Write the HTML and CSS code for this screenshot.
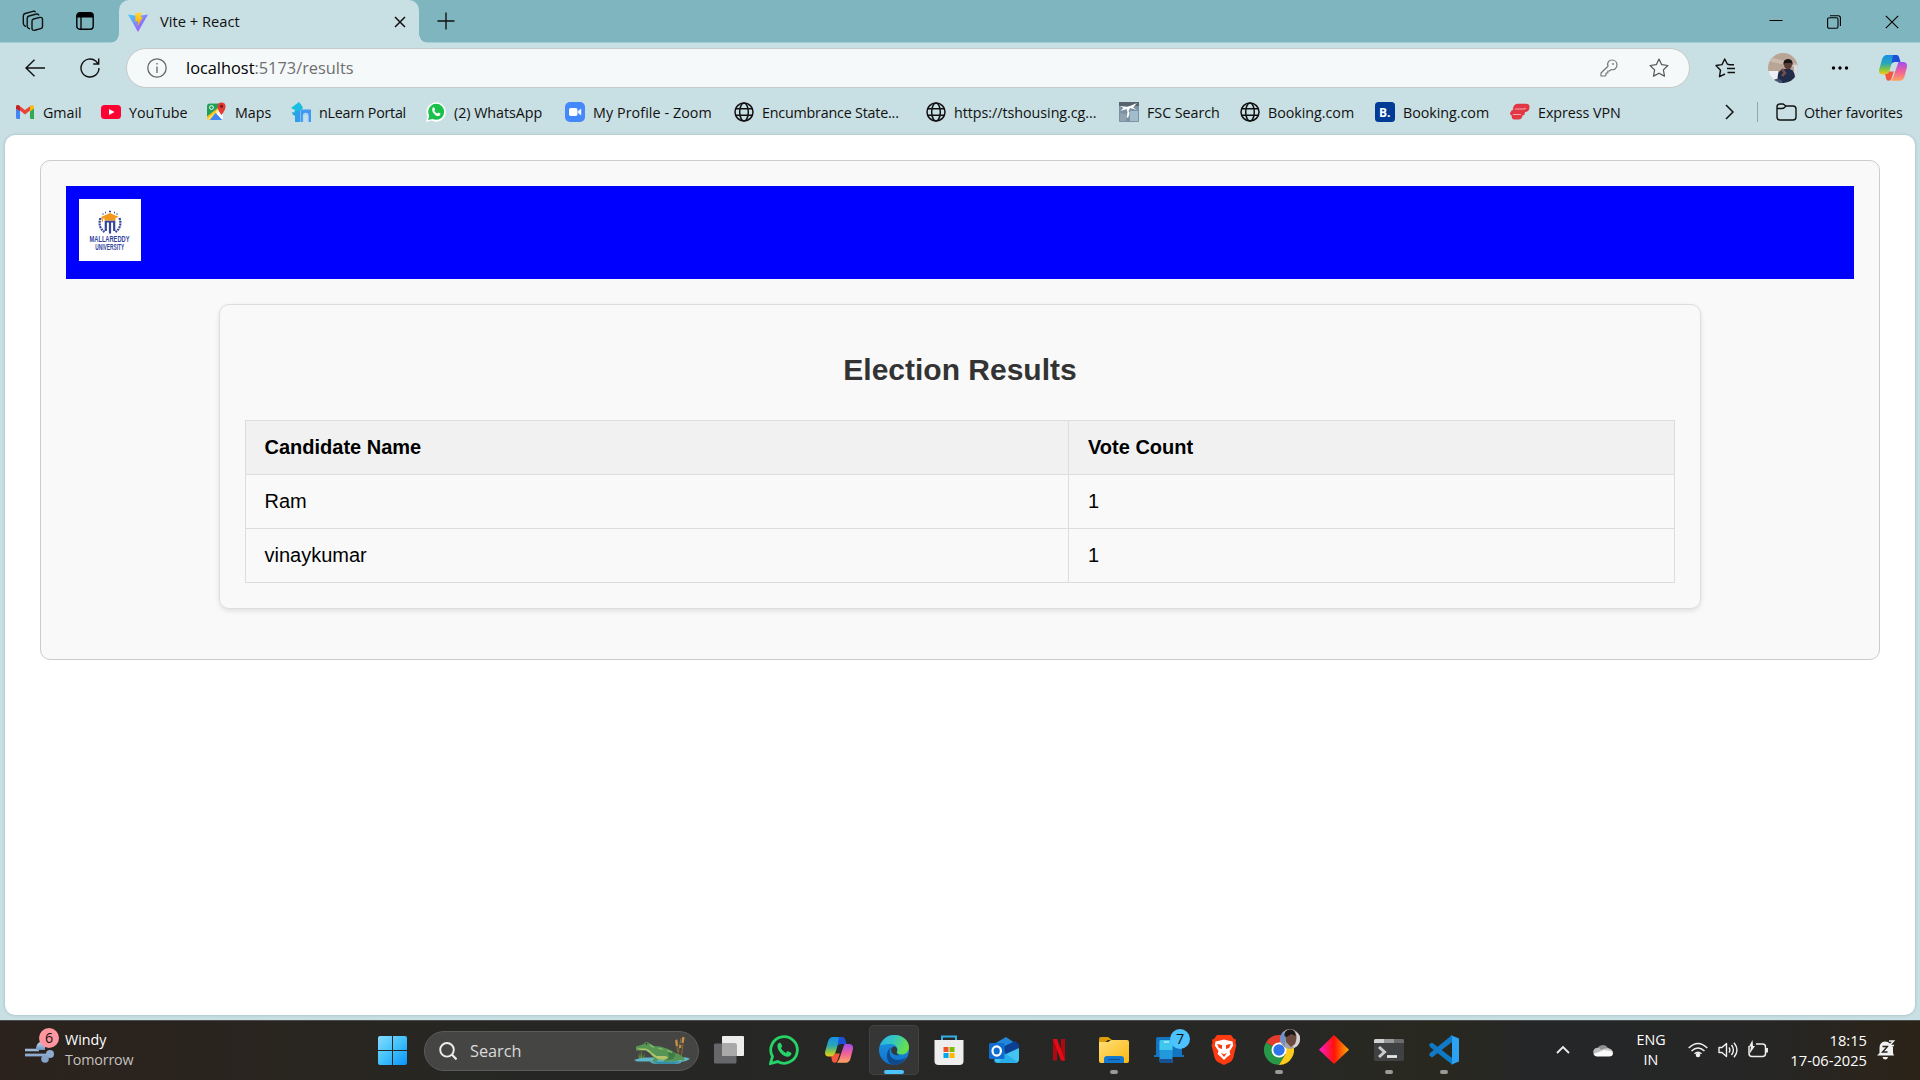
FILE: index.html
```html
<!DOCTYPE html>
<html lang="en">
<head>
<meta charset="utf-8">
<title>Vite + React</title>
<link rel="stylesheet" href="styles.css">
</head>
<body>
<svg class="defs" width="0" height="0" aria-hidden="true">
  <defs>
    <linearGradient id="cpA" x1="0" y1="0" x2="0" y2="1"><stop offset="0" stop-color="#168fe8"/><stop offset=".45" stop-color="#2aa8b4"/><stop offset=".75" stop-color="#8cc63f"/><stop offset="1" stop-color="#f7c91d"/></linearGradient>
    <linearGradient id="cpB" x1="0" y1="0" x2="0" y2="1"><stop offset="0" stop-color="#a04df0"/><stop offset=".5" stop-color="#f0609a"/><stop offset="1" stop-color="#ffa45e"/></linearGradient>
    <linearGradient id="win" x1="0" y1="0" x2="1" y2="1"><stop offset="0" stop-color="#86dcff"/><stop offset=".5" stop-color="#41c1fb"/><stop offset="1" stop-color="#0a93fa"/></linearGradient>
    <linearGradient id="edgeT" x1="0" y1="0" x2="1" y2=".35"><stop offset="0" stop-color="#2bb5e6"/><stop offset=".5" stop-color="#35c6c0"/><stop offset="1" stop-color="#66e04c"/></linearGradient>
    <linearGradient id="edgeL" x1="0" y1="0" x2="0" y2="1"><stop offset="0" stop-color="#1b9de2"/><stop offset="1" stop-color="#1170cc"/></linearGradient>
    <linearGradient id="vite" x1="0" y1="0" x2="1" y2="1"><stop offset="0" stop-color="#41d1ff"/><stop offset="1" stop-color="#bd34fe"/></linearGradient>
    <linearGradient id="bolt" x1="0" y1="0" x2="0" y2="1"><stop offset="0" stop-color="#ffdd35"/><stop offset="1" stop-color="#ff9e00"/></linearGradient>
    <linearGradient id="dia" x1="0" y1="0" x2="1" y2="0"><stop offset="0" stop-color="#ff1bd0"/><stop offset=".5" stop-color="#ff1208"/><stop offset="1" stop-color="#ffae00"/></linearGradient>
    <linearGradient id="fold" x1="0" y1="0" x2="1" y2="1"><stop offset="0" stop-color="#ffde7a"/><stop offset="1" stop-color="#fbb90f"/></linearGradient>
    <linearGradient id="wind" x1="0" y1="0" x2="0" y2="1"><stop offset="0" stop-color="#c3d6ee"/><stop offset="1" stop-color="#6d94c0"/></linearGradient>
    <symbol id="globe" viewBox="0 0 20 20"><g fill="none" stroke="#111" stroke-width="1.5"><circle cx="10" cy="10" r="9"/><ellipse cx="10" cy="10" rx="4.3" ry="9"/><path d="M1.8 6.7h16.4M1.8 13.3h16.4"/></g></symbol>
    <symbol id="copilot" viewBox="0 0 28 26"><path d="M8 0h8l-1.500 2.500L10 17q-1 2.500-4 2.500H3.500C.5 19.500-.5 17 .3 14L3 4.500Q4.300 0 8 0z" fill="url(#cpA)"/><path d="M14 0h3.500c2 0 2.600 2 3 3.500L21.500 7h-4c-3 0-4 .6-5 2z" fill="#1c50d8"/><path d="M20 7h4c3.600 0 4.600 2.500 3.700 6l-2.200 8.500c-.7 2.600-2 4.300-5 4.300H12l2-3 4.500-13Q19 7 20 7z" fill="url(#cpB)"/><path d="M6 19.300q3.500-.3 4.300-2.800h4.500l-2.300 7q-.8 2.300-3 2.300C7.700 25.800 7 24 6.700 22z" fill="#f4573c"/></symbol>
  </defs>
</svg>

<header class="titlebar">
  <svg class="workspaces" viewBox="0 0 22 22" fill="none" stroke="#111" stroke-width="1.4" stroke-linejoin="round"><path d="M11.500 9l6.500-1.600q2.500-.4 2.500 2v7q0 1.800-1.800 2.300l-6 1.600q-2.700.5-2.700-2v-7q0-1.900 1.500-2.300z"/><path d="M8 18.800l-1.300-.5q-1.500-.6-1.500-2.300V8.500q0-2 1.800-2.500l7.500-2q2-.3 2.400 1.500"/><path d="M4 16.500l-1.200-.6Q1.300 15 1.300 13V6q0-2 1.800-2.500L11 1.300q1.800-.4 2.500 1"/></svg>
  <svg class="tab-actions" viewBox="0 0 18 18"><rect x=".8" y=".8" width="16.400" height="16.400" rx="3" fill="none" stroke="#000" stroke-width="1.4"/><path d="M1 5.500V3.500Q1 1 3.500 1h11Q17 1 17 3.500v2z"/><path d="M5 5v12" stroke="#000" stroke-width="1.300"/></svg>
  <div class="tab">
    <svg class="favicon" viewBox="0 0 20 20"><path d="M0 2.500l10 1.400 10-1.400L10 20z" fill="url(#vite)"/><path d="M7.200 1.500L13.600 0l-.9 5 2.300-.3-5.600 10 .5-5.500-2.500.6z" fill="url(#bolt)"/></svg>
    <span class="tab-name">Vite + React</span>
    <svg class="tab-close" viewBox="0 0 12 12"><path d="M1 1l10 10M11 1L1 11" stroke="#111" stroke-width="1.500"/></svg>
  </div>
  <svg class="new-tab" viewBox="0 0 18 18"><path d="M9 .5v17M.5 9h17" stroke="#111" stroke-width="1.400"/></svg>
  <div class="window-buttons">
    <svg viewBox="0 0 14 14"><path d="M.5 5.500h13" stroke="#000"/></svg>
    <svg viewBox="0 0 14 14" fill="none" stroke="#000" stroke-width="1.100"><rect x=".6" y="2.800" width="10.400" height="10.400" rx="1.500"/><path d="M3 .7h8.200q2.200 0 2.200 2.200V11"/></svg>
    <svg viewBox="0 0 14 14"><path d="M.8.800l12.400 12.400M13.200.800L.8 13.200" stroke="#000" stroke-width="1.100"/></svg>
  </div>
</header>

<div class="toolbar">
  <svg class="back" viewBox="0 0 20 18"><path d="M9.500.700L1 9l8.500 8.300M1 9h19" fill="none" stroke="#111" stroke-width="1.400"/></svg>
  <svg class="reload" viewBox="0 0 20 20"><path d="M19 10a9 9 0 1 1-3-6.700L18.500 6M18.700.500V6h-5.500" fill="none" stroke="#111" stroke-width="1.400"/></svg>
  <div class="address">
    <svg class="info" viewBox="0 0 20 20"><circle cx="10" cy="10" r="9.200" fill="none" stroke="#666" stroke-width="1.300"/><path d="M10 8.500V15M10 5v1.600" stroke="#666" stroke-width="1.300"/></svg>
    <span class="url"><b>localhost</b>:5173/results</span>
    <svg class="key" viewBox="0 0 18 18" fill="none" stroke="#777" stroke-width="1.200"><path d="M8 7.200C6.800 3.500 9 1 12 1c2.800 0 5 2 5 5s-2.500 5.400-6 4.600L9.500 12H7.800v2H6v2l-1 1H1v-3z" stroke-linejoin="round"/><circle cx="13" cy="5" r=".9" fill="#777" stroke="none"/></svg>
    <svg class="star" viewBox="0 0 20 20"><path d="M10 1l2.700 5.700 6.200.8-4.500 4.400 1.100 6.200L10 15.200l-5.500 2.900 1.100-6.200L1.100 7.500l6.200-.8z" fill="none" stroke="#555" stroke-width="1.200" stroke-linejoin="round"/></svg>
  </div>
  <svg class="favs" viewBox="0 0 20 20" fill="none" stroke="#111" stroke-width="1.400" stroke-linejoin="round"><path d="M10 16l-5.500 2.700 1-6.500L1 7.500l6-.9L9.700 1l2.600 5 1.700.7H19M12 10.500h8M12.500 14.500H20"/></svg>
  <svg class="avatar" viewBox="0 0 30 30"><clipPath id="av"><circle cx="15" cy="15" r="15"/></clipPath><g clip-path="url(#av)"><path fill="#b9a596" d="M0 0h30v30H0z"/><path d="M0 4l30 7v4L0 8z" fill="#cbbbae"/><path d="M0 18h10v12H0z" fill="#edf0f5"/><path d="M26 12h4v12h-4z" fill="#d7dce4"/><path d="M10 30q-2-13 6-14h6q6 2 5 14z" fill="#202c4a"/><ellipse cx="20" cy="11.500" rx="4" ry="5" fill="#5b3e37"/><path d="M15.500 12q-.7-6 4.500-6t4.600 6l-1.500-2h-6z" fill="#191515"/><path d="M14 16l3 4-3 3" stroke="#754f47" stroke-width="2.500" fill="none"/><path d="M6 27q4-3 8 1v2H5z" fill="#43536f"/></g></svg>
  <svg class="dots" viewBox="0 0 18 6"><circle cx="2.500" cy="3" r="1.700"/><circle cx="9" cy="3" r="1.700"/><circle cx="15.500" cy="3" r="1.700"/></svg>
  <svg class="copilot-btn"><use href="#copilot"/></svg>
</div>

<nav class="bookmarks">
  <div class="bm"><svg viewBox="-1 0 20 20"><path d="M0 5v10.500q0 1.500 1.500 1.500H4V8z" fill="#4285f4"/><path d="M18 5v12h-2.500q-1.500 0-1.500-1.500V8z" fill="#34a853"/><path d="M0 5q.3-3 3-1.600L9 8l6-4.600L14 8.500l-5 4-5-4L0 7z" fill="#ea4335"/><path d="M14 4.200Q17.500 2 18 5v1.500l-4 3z" fill="#fbbc04"/><path d="M0 5q.3-3 3-1.600l1 .8V9L0 6.500z" fill="#c5221f"/></svg><span>Gmail</span></div>
  <div class="bm"><svg viewBox="0 0 20 20"><rect y="3" width="20" height="14" rx="3.500" fill="#f03"/><path d="M8 7l5.500 3L8 13z" fill="#fff"/></svg><span>YouTube</span></div>
  <div class="bm"><svg viewBox="0 0 20 20"><rect x="0" y="1.500" width="16" height="16" rx="2" fill="#f2f2f2"/><path d="M0 16V4q0-2.500 2.500-2.500H12v6z" fill="#1fa05a"/><path d="M3 18l5.500-7 6.500 7z" fill="#4287f5"/><path d="M0 14.500L12 5l2 3L3 18H2q-2 0-2-2z" fill="#fbc31c"/><path d="M3 18l5.500-7 6.500 7z" fill="#4287f5"/><path d="M1 17L12 6.500l4 9.500q0 1-1 1.500l-6.500-7.500L2 17.700z" fill="#fff" opacity=".7"/><path d="M4 18l4.500-5.500 5 5.500z" fill="#4287f5"/><circle cx="4.500" cy="5.500" r="1.900" fill="none" stroke="#fff"/><path d="M14.500 13Q10.500 8 10.500 4.500a4 4 0 0 1 8 0q0 3.500-4 8.500z" fill="#e53935"/><circle cx="14.500" cy="4.200" r="1.500" fill="#6d1b1b"/></svg><span>Maps</span></div>
  <div class="bm"><svg viewBox="0 0 20 20"><path d="M8 0l2.500 3L12 6 9 9l-2 3-4-1.500L4 8 0 6l4-3z" fill="#19bfe0"/><path d="M4 9h5v11H4z" fill="#2f9eea"/><path d="M1 10l4 1v3l-3-1z" fill="#19a9e0"/><path d="M9.500 7.500H20V20h-3v-6q0-2-2.200-2T12.500 14v6h-3z" fill="#4197f2"/><path d="M12.500 20v-6q0-2.500 2.300-2.500T17 14v6" fill="none" stroke="#a9d6fb" stroke-width="1.400"/></svg><span class="nlearn">nLearn Portal</span></div>
  <div class="bm"><svg viewBox="0 0 20 20"><path d="M0 20l1.500-5.500A9.700 9.700 0 1 1 5.600 18.600z" fill="#fff"/><circle cx="10.200" cy="9.800" r="8" fill="#19c14a"/><path d="M2 18l1.500-5 3.500 3.700z" fill="#19c14a"/><path d="M6.300 6.500c.8-1.800 2-1.200 2.300-.3l.5 1.300-.8 1.200q1 2 3 2.900l1-1.100 2 1c.6.5-.3 2.300-1.800 2.600-3 .3-7-4-6.200-7.600z" fill="#fff"/></svg><span>(2) WhatsApp</span></div>
  <div class="bm"><svg viewBox="0 0 20 20"><rect width="20" height="20" rx="5" fill="#4389fb"/><rect x="4" y="6" width="8.500" height="8" rx="1.800" fill="#fff"/><path d="M13.200 9l3-2.500v7l-3-2.500z" fill="#fff"/></svg><span class="zoomed">My Profile - Zoom</span></div>
  <div class="bm"><svg><use href="#globe"/></svg><span class="encumb">Encumbrance State...</span></div>
  <div class="bm"><svg><use href="#globe"/></svg><span>https://tshousing.cg...</span></div>
  <div class="bm"><svg viewBox="0 0 20 20"><rect width="20" height="20" rx="1" fill="#7b92a4"/><path d="M0 0h20v4H0z" fill="#57636f"/><path d="M11 9h8v10H11z" fill="#a2bccb"/><path d="M1 4l7 1 3-1 7-3-4 4.500 4 2.500-7-2-1.500 3 1 2-1 4-2 1 1-6-1-3-6 2 3-3z" fill="#fff"/><path d="M1 11l6 1v7H1z" fill="#92a2ae"/></svg><span>FSC Search</span></div>
  <div class="bm"><svg><use href="#globe"/></svg><span>Booking.com</span></div>
  <div class="bm"><svg viewBox="0 0 20 20"><rect width="20" height="20" rx="3.500" fill="#003b95"/><text x="4" y="15" class="b-mark">B.</text></svg><span>Booking.com</span></div>
  <div class="bm"><svg viewBox="0 0 20 20"><path d="M8 1.800h8q3.800 0 3.500 3.700-.3 4.300-4.500 4.500.2 3-2.500 3.500-.5 4-4 4H4.500q-3.200 0-2.700-4Q-.5 13.200.3 10.500 1 8 4 7.500H2.700Q3.500 1.800 8 1.800z" fill="#e23744"/><path d="M5 7h8.500q1.500 0 2-1M3 12.500h8" stroke="#f3a9ae" stroke-width="1.200" fill="none"/></svg><span>Express VPN</span></div>
  <div class="bm-more">
    <svg class="bm-chev" viewBox="0 0 9 16"><path d="M1 1l7 7-7 7" fill="none" stroke="#111" stroke-width="1.500"/></svg>
    <i class="bm-sep"></i>
    <svg class="bm-folder" viewBox="0 0 21 18"><path d="M1 4q0-3 3-3h3l3 2h7q3 0 3 3v8q0 3-3 3H4q-3 0-3-3zM1 5.500h5q1.500 0 2.500-1L10 3" fill="none" stroke="#111" stroke-width="1.400"/></svg>
    <span class="other">Other favorites</span>
  </div>
</nav>

<main class="page">
  <section class="container">
    <div class="banner">
      <svg class="logo" viewBox="0 0 62 62"><path fill="#fff" d="M0 0h62v62H0z"/><g fill="none" stroke="#34449a" stroke-width="2.200" stroke-dasharray="2 .8"><path d="M21.500 19q-3 9 4 14M40.500 19q3 9-4 14"/></g><path d="M26.800 32v-9.500h8.400V32M31 22v12.500" fill="none" stroke="#34449a" stroke-width="2.200"/><path d="M22 18l9-4 9 4-3.500 1v2.500h-11v-2.200L24 19.800V23h-1.200v-4z" fill="#f39a1e"/><path d="M30 12.500h2M26 13.500h1M35 13.500h1M23.500 15h1M37.500 15h1" stroke="#34449a" stroke-width="1.300"/><text class="logo-text" x="10.500" y="43.300" font-size="9.800" textLength="40" lengthAdjust="spacingAndGlyphs">MALLAREDDY</text><text class="logo-text" x="16.300" y="51" font-size="8.600" textLength="29" lengthAdjust="spacingAndGlyphs">UNIVERSITY</text></svg>
    </div>
    <div class="card">
      <h2>Election Results</h2>
      <table>
        <thead><tr><th class="col-name">Candidate Name</th><th>Vote Count</th></tr></thead>
        <tbody><tr><td>Ram</td><td>1</td></tr><tr><td>vinaykumar</td><td>1</td></tr></tbody>
      </table>
    </div>
  </section>
</main>

<footer class="taskbar">
  <div class="weather">
    <svg viewBox="0 0 34 36"><path d="M1 20h14" stroke="#9db8d8" stroke-width="2.600"/><path d="M12 19q0-5 4-7l5 3v5h-7z" fill="url(#wind)"/><path d="M1 25h26" stroke="#8fabd0" stroke-width="2.800" fill="none"/><circle cx="26" cy="24" r="4" fill="#8fabd0"/><circle cx="21" cy="29" r="3.800" fill="#84a3c9"/></svg>
    <span class="alert">6</span>
    <div class="weather-text"><span>Windy</span><span class="dim">Tomorrow</span></div>
  </div>
  <svg class="start" viewBox="0 0 29 29"><path d="M0 2q0-2 2-2h12v14H0zM15 0h12q2 0 2 2v12H15zM0 15h14v14H2q-2 0-2-2zM15 15h14v12q0 2-2 2H15z" fill="url(#win)"/></svg>
  <div class="search">
    <svg class="glass" viewBox="0 0 18 18"><circle cx="8" cy="7.800" r="6.800" fill="none" stroke="#eee" stroke-width="1.900"/><path d="M12.800 12.600l4.700 4.800" stroke="#eee" stroke-width="2.200"/></svg>
    <span>Search</span>
    <svg class="croc" viewBox="0 0 56 30"><path d="M0 24q6-3 14-2.500l32-.5q8 0 10 2-4 2.500-9 3 1 2-10 2H25q-8 0-9-2.500H5q-3 0-5-1.500z" fill="#5fb8c9"/><path d="M17 25.500h30l-6 2.500H24z" fill="#368fa9"/><path d="M4.500 22l.5-6 1 6 1.500-8 .8 8 2.700-5-1 5" fill="#5d8e3f"/><path d="M43.500 22l3.500-20M49 8l-2 14M42.500 3l1 13" stroke="#8b6a35" stroke-width="1" fill="none"/><path d="M48.500 7l1-6M43 10l-.8-6M46 12l.3-3" stroke="#c4904a" stroke-width="2.300"/><path d="M2 10.500q4-1.500 8-2.500 1-2.500 3.500-1.800 3.500 1.800 6.500 3.800 7 0 12 2.200 7 2.600 9 4.800 6 1 10 6.500-2 1.500-5 .5-5 2-10 1l-1.500.8h-5l1-2-6-.3-2 2h-5l3-3-5-5.500-5-3q-4 .8-8.500.5z" fill="#569554"/><path d="M2.500 12.500h9q4 1 6 4l5 3.500h9l3 1.500-4 2.300-6.500-.5-1.500-1q-4-2-6.500-5.300L12 14q-6 .7-9.500-1.500z" fill="#b5c46a"/><path d="M34 17q4-3 7.500 1.500L39 23l-6 1 2-3z" fill="#3f7a48"/><circle cx="12.500" cy="7.800" r=".8" fill="#222"/><path d="M16 9l4 2.500M24 12l5 1.500M33 14.500l5 2" stroke="#8cc06a" stroke-width="1.200"/></svg>
  </div>
  <div class="apps">
    <div class="app"><svg viewBox="0 0 30 30"><rect x="8" y="1" width="22" height="20" rx="1" fill="#eeeded"/><rect y="8.500" width="22.500" height="20" rx="1.500" fill="#66676a"/><path d="M8 8.500h14.500V21H8z" fill="#aaa9aa"/></svg></div>
    <div class="app"><svg viewBox="0 0 30 30"><path d="M1.500 28.500l2-7A13.300 13.300 0 1 1 8.700 26.600z" fill="none" stroke="#25d366" stroke-width="2.800"/><path d="M8.500 10c1-3 3.200-2.500 3.700-1.300l1 2.600-1.200 2q1.500 3 5 4.600l1.500-1.900 3.700 1.700c.8.800-.5 3.600-3 4C14.500 22.200 7.500 15.500 8.500 10z" fill="#25d366"/></svg></div>
    <div class="app"><svg class="cp"><use href="#copilot"/></svg></div>
    <div class="app active"><svg viewBox="0 0 30 30"><circle cx="15" cy="15" r="15" fill="url(#edgeL)"/><path d="M1 10.500C4 3 10 0 16 0c8 0 14 6 14 12 0 5-3.500 7.500-7.500 7.500-3.500 0-5-1.500-4.500-3 1.500-3-1-7.500-6-7.500-4.500 0-8 .5-11 1.500z" fill="url(#edgeT)"/><path d="M12 12c-3.500 6-.5 13 7 13 3 0 5.500-.8 8-2.500C24 27.500 19.500 30 15 30 8 30 5 18 12 12z" fill="#114a8b"/><path d="M12 14.500q1-3.500 4-3 3 1.500 2 5-1.300 2 2 3.500-4 1-6.500-1.500Q12 17 12 14.500z" fill="#303a3e"/></svg><i class="run on"></i></div>
    <div class="app"><svg viewBox="0 0 30 30"><path d="M8 6V1.500h14V6" fill="none" stroke="#35aee8" stroke-width="2"/><path d="M.5 5h29v21q0 4-4 4h-21q-4 0-4-4z" fill="#efeeee"/><path fill="#f25022" d="M9.500 12h5v5h-5z"/><path fill="#7fba00" d="M15.500 12h5v5h-5z"/><path fill="#00a4ef" d="M9.500 18h5v5h-5z"/><path fill="#ffb900" d="M15.500 18h5v5h-5z"/></svg></div>
    <div class="app"><svg viewBox="0 0 30 30"><path d="M5 9L17 2l12 8v14q0 4-4 4H8q-3 0-3-3z" fill="#2187d8"/><path d="M14 12l12-6 4 3.500v4L17 21z" fill="#0b3f91"/><path d="M6 24l24-11v11q0 4-4 4H10q-4 0-4-4z" fill="#43c5f2"/><path d="M17 19l11.500 8q-1 1-3 1H9z" fill="#2aaeea"/><rect y="8" width="15.500" height="16" rx="1.500" fill="#0f6cd1"/><ellipse cx="7.700" cy="16" rx="4.200" ry="4.700" fill="none" stroke="#fff" stroke-width="2.200"/></svg></div>
    <div class="app"><svg viewBox="0 0 30 30"><path d="M9 4h4v21.500H9zM17 4h4v21.500h-4z" fill="#ae0911"/><path d="M9 4h4l8 21.500h-4z" fill="#e60a16"/></svg></div>
    <div class="app"><svg viewBox="0 0 30 30"><path d="M0 4q0-2 2-2h7l4 3h-4L0 12z" fill="#dc9d0b"/><path d="M0 7h9l3-2h16q2 0 2 2v19q0 2-2 2H2q-2 0-2-2z" fill="url(#fold)"/><path d="M5 28v-4q0-3 3-3h14q3 0 3 3v4z" fill="#1478cf"/><path d="M9 24.500h12" stroke="#0b549b" stroke-width="1.200"/></svg><i class="run"></i></div>
    <div class="app"><svg viewBox="0 0 30 30"><path d="M2 4q0-2 2-2h22q2 0 2 2v16h2v2H0v-2h2z" fill="#1374bf"/><path d="M5.500 5h13v23h-11q-2 0-2-2z" fill="#2199dc"/><path d="M5.500 7q0-2 2-2h11v10h-13z" fill="#41c7ef"/><path d="M5.500 24h13v4h-11q-2 0-2-2z" fill="#174f91"/><path d="M10 7h5" stroke="#eff" stroke-width="1"/></svg><span class="count">7</span></div>
    <div class="app"><svg viewBox="0 0 30 30"><path d="M8 0h14l3 4 2 .5-.5 3.500.8 2-3 13q-1 3-4 4.500L15 30l-5.300-2.500q-3-1.500-4-4.500L2.500 10l1-2L3 4.500 5 4z" fill="#fb3b12"/><path d="M15 4.500l4 1 4.500 1 .7 4-3.700 6 1 3-3.500 2.500-3 3-3-3L8.500 19l1-3-3.700-5.500.7-4 4.500-1z" fill="#fff"/><path d="M8 9l5 1v4l-3-1zM22 9l-5 1v4l3-1zM12 18l3 1.200 3-1.200-3 4z" fill="#fb3b12"/></svg></div>
    <div class="app"><svg viewBox="0 0 30 30"><path d="M15 15L2 7.500A15 15 0 0 1 28 7.500z" fill="#e33b2e"/><path d="M15 15L2 7.500A15 15 0 0 0 15 30l6.500-11z" fill="#279847"/><path d="M15 15V7.500h13A15 15 0 0 1 15 30l6.500-11z" fill="#fdcb1c"/><circle cx="15" cy="15" r="7.500" fill="#fff"/><circle cx="15" cy="15" r="5.700" fill="#2e74eb"/></svg><svg class="mini" viewBox="0 0 20 20"><circle cx="10" cy="10" r="10" fill="#a9a3a2"/><path d="M3 3Q0 6 0 11l5 7V5z" fill="#6c8fd0"/><path d="M15 3q6 2 5 8-1 6-6 8l-2-4z" fill="#d8d0d0"/><path d="M5 3q5-5 10 0 3 5 0 12l-4 3-5-5z" fill="#6d4a40"/><path d="M4.500 7q-.5-6 6-6.500 5 .5 5 6.500l-4-2-5 3z" fill="#1b1818"/></svg><i class="run"></i></div>
    <div class="app"><svg viewBox="0 0 30 30"><path d="M15 0l15 14.700L15 29 0 14.700z" fill="url(#dia)"/></svg></div>
    <div class="app"><svg viewBox="0 0 30 30"><rect y="4" width="30" height="22" rx="1.500" fill="#404143"/><path d="M0 8V5.500Q0 4 1.500 4H10v4z" fill="#d2d2d2"/><path d="M10 4h10v4H10z" fill="#999"/><path d="M20 4h8.500Q30 4 30 5.500V8H20z" fill="#6b6b6b"/><path d="M5 12l5.500 5L5 22" fill="none" stroke="#ccc" stroke-width="3"/><path d="M13 21.500h10" stroke="#e5e5e5" stroke-width="2.800"/></svg><i class="run"></i></div>
    <div class="app"><svg viewBox="0 0 30 30"><path d="M0 9.500l3-2L23 23v6.500L1 12z" fill="#0c7ac4"/><path d="M0 20l3 2.500L23 7V0L1 18z" fill="#1279c9"/><path d="M21.500 0L30 3.500v23L21.500 30q1.500-.5 1.500-2.500v-25Q23 .5 21.500 0z" fill="#2ba3f2"/></svg><i class="run"></i></div>
  </div>
  <div class="tray">
    <svg class="up" viewBox="0 0 14 9"><path d="M1 8l6-6 6 6" fill="none" stroke="#eee" stroke-width="1.800"/></svg>
    <svg class="cloud" viewBox="0 0 20 14"><path d="M4 7a6 6 0 0 1 11-2l-4 5z" fill="#8f8f8f"/><circle cx="4.500" cy="9" r="4.300" fill="#bdbdbd"/><path d="M15 5q4 1 5 4l-5 3-8-4 3-2z" fill="#c9c9c9"/><path d="M.5 11q1 2.500 4 2.500H16q4 0 4-3.500 0-1.500-3-2l-6-1z" fill="#fafafa"/></svg>
    <div class="lang"><span>ENG</span><span>IN</span></div>
    <svg class="sys" viewBox="0 0 20 20" fill="none" stroke="#eee" stroke-width="1.500"><path d="M.7 8q9.300-9 18.600 0M3.500 11q6.500-6 13 0M6.500 13.700q3.500-3 7 0"/><circle cx="10" cy="15" r="1.500" fill="#eee"/></svg>
    <svg class="sys" viewBox="0 0 20 20" fill="none" stroke="#eee" stroke-width="1.400"><path d="M1 7.500h3l4.500-4v13l-4.500-4H1zM11 7.500q1.800 2.500 0 5M13.500 5q3.800 5 0 10M16 2.700q6 7.300 0 14.600" stroke-linejoin="round"/></svg>
    <svg class="sys battery" viewBox="0 0 20 20" fill="none" stroke="#eee" stroke-width="1.500"><path d="M8 4h6.500q3 0 3 3v6.500q0 3-3 3H4q-3 0-3-3V6"/><path d="M18.700 8v4.500" stroke-width="2.500"/><path d="M4.500 0L1 6.500h2L1.500 14 7 6H5z" fill="#eee" stroke="none"/></svg>
    <div class="clock"><span>18:15</span><span>17-06-2025</span></div>
    <svg class="bell" viewBox="0 0 18 20"><path d="M2.500 8q0-6 5.500-6.500 3 0 5 2v1L16 7v6l1 2.500H0L2.500 13zM5.500 17h5.500q-.5 2.500-2.700 2.500T5.500 17z" fill="#f1f1f1"/><path d="M5.500 6.500h5L5.500 12h5" fill="none" stroke="#26231c" stroke-width="1.400"/><path d="M12 1h4.500L12.500 5.500H17" fill="none" stroke="#f1f1f1" stroke-width="1.500"/></svg>
  </div>
</footer>
</body>
</html>
```
FILE: styles.css
```css
* { box-sizing: border-box; }
body {
  margin: 0;
  width: 1920px;
  height: 1080px;
  overflow: hidden;
  display: flex;
  flex-direction: column;
  background: #c8dfe3;
  font-family: "Open Sans", "Noto Sans", sans-serif;
  font-size: 14.300px;
  color: #111;
}
svg { display: block; flex: none; }
.defs { position: absolute; }

/* Tab strip */
.titlebar {
  height: 43px;
  display: flex;
  align-items: center;
  background: #7fb5be;
  border-bottom: 1px solid #a5cdd4;
  padding-left: 22px;
}
.workspaces { width: 22px; height: 22px; }
.tab-actions { width: 18px; height: 18px; margin-left: 32px; }
.tab {
  position: relative;
  width: 300px;
  height: 43px;
  margin: 0 0 -1px 25px;
  padding: 0 13px 0 9px;
  display: flex;
  align-items: center;
  background: #c8dfe3;
  border-radius: 10px 10px 0 0;
}
.tab::before,
.tab::after {
  content: "";
  position: absolute;
  bottom: 0;
  width: 9px;
  height: 9px;
}
.tab::before { left: -9px; background: radial-gradient(circle at 0 0, transparent 8.500px, #c8dfe3 9px); }
.tab::after { right: -9px; background: radial-gradient(circle at 100% 0, transparent 8.500px, #c8dfe3 9px); }
.favicon { width: 20px; height: 20px; }
.tab-name { margin-left: 12px; flex: 1; font-size: 14.700px; line-height: 20px; margin-top: -1px; }
.tab-close { width: 12px; height: 12px; }
.new-tab { width: 18px; height: 18px; margin-left: 18px; }
.window-buttons { display: flex; gap: 44px; margin: 1px 21.500px 0 auto; }
.window-buttons svg { width: 14px; height: 14px; }

/* Address row */
.toolbar {
  height: 50px;
  display: flex;
  align-items: center;
  padding-left: 25px;
}
.back { width: 20px; height: 18px; }
.reload { width: 20px; height: 20px; margin-left: 35px; }
.address {
  width: 1564px;
  height: 40px;
  margin-left: 26px;
  padding: 0 20px;
  display: flex;
  align-items: center;
  background: #f5f9fa;
  border: 1px solid #c9c9c9;
  border-radius: 20px;
}
.info { width: 20px; height: 20px; }
.url { margin-left: 19px; flex: 1; font-size: 16.350px; line-height: 24px; color: #6e6f70; margin-top: -1px; }
.url b { font-weight: 400; color: #000; }
.key { width: 18px; height: 18px; }
.star { width: 20px; height: 20px; margin-left: 31px; }
.favs { width: 20px; height: 20px; margin-left: 25px; }
.avatar { width: 30px; height: 30px; margin-left: 33px; }
.dots { width: 18px; height: 6px; margin-left: 33px; }
.copilot-btn { width: 28px; height: 26px; margin-left: 30px; }

/* Favorites bar */
.bookmarks {
  height: 42px;
  padding: 0 0 4px 15px;
  display: grid;
  grid-template-columns: 86px 106px 84px 135px 139px 169px 192px 193px 121px 135px 135px 215px 1fr;
  align-items: center;
}
.bm, .bm-more { display: flex; align-items: center; white-space: nowrap; }
.bm svg { width: 20px; height: 20px; margin-right: 8px; }
.bm span { letter-spacing: -.04px; }
.bm .nlearn { letter-spacing: -.25px; }
.bm .zoomed { letter-spacing: .08px; }
.bm .encumb { letter-spacing: -.2px; }
.bm-more .other { letter-spacing: -.12px; }
.b-mark { font: bold 12px "Open Sans", sans-serif; fill: #fff; }
.bm-chev { width: 9px; height: 16px; }
.bm-sep { width: 1px; height: 20px; margin: 0 18px 0 23px; background: #8fa9ad; }
.bm-folder { width: 21px; height: 18px; margin-right: 7px; }

/* Web page */
.page {
  height: 880px;
  margin: 0 5px;
  padding: 25px 35px;
  background: #fff;
  border-radius: 10px;
  box-shadow: 0 0 3px rgba(60, 110, 120, .35);
  font-family: Arial, "Liberation Sans", sans-serif;
  font-size: 20px;
}
.container {
  height: 500px;
  padding: 25px;
  background: #f9f9f9;
  border: 1px solid #ccc;
  border-radius: 10px;
}
.banner { height: 93px; padding: 13px; background: #00f; }
.logo { width: 62px; height: 62px; overflow: visible; }
.logo-text { font-family: "Liberation Sans", sans-serif; font-weight: 700; fill: #34449a; }
.card {
  width: 1482px;
  height: 305px;
  margin: 25px auto 0;
  padding: 25px;
  border: 1px solid #ddd;
  border-radius: 10px;
  box-shadow: 0 2px 5px rgba(0, 0, 0, .1);
}
h2 { margin: 22px 0 33px; font-size: 30px; line-height: 35px; text-align: center; color: #333; }
table { width: 100%; border-collapse: collapse; color: #000; }
th, td { height: 54px; padding: 0 19px; border: 1px solid #ddd; text-align: left; }
th { background: #f1f1f1; }
.col-name { width: 823px; }
th:first-child, td:first-child { padding-left: 18.500px; }

/* Windows taskbar */
.taskbar {
  height: 60px;
  margin-top: 5px;
  display: flex;
  align-items: center;
  padding-left: 24px;
  background: linear-gradient(90deg, #2b221d, #29251f 15%, #262724 27%, #272825 68%, #29281f 75%, #252628 80%, #262625 92%, #2c2318);
  border-top: 1px solid #4a4f4e;
  color: #fff;
}
.weather { position: relative; display: flex; width: 354px; margin-top: -2px; }
.weather svg { width: 34px; height: 36px; }
.alert {
  position: absolute;
  left: 15px;
  top: -2px;
  width: 20px;
  height: 20px;
  border-radius: 50%;
  background: #ff96a0;
  color: #111;
  line-height: 20px;
  text-align: center;
}
.weather-text, .lang, .clock { display: flex; flex-direction: column; line-height: 20px; }
.weather-text { margin-left: 7px; }
.dim { color: #c4c1be; letter-spacing: -.15px; }
.start { width: 29px; height: 29px; }
.search {
  width: 275px;
  height: 40px;
  margin: 0 5px 0 17px;
  padding: 0 8px 0 14px;
  display: flex;
  align-items: center;
  background: #454543;
  border: 1px solid #5b5b59;
  border-radius: 20px;
  color: #dadada;
}
.glass { width: 18px; height: 18px; }
.search span { margin-left: 13px; flex: 1; font-size: 16.300px; }
.croc { width: 56px; height: 30px; }
.apps { display: flex; gap: 5px; margin-top: -1px; }
.app {
  position: relative;
  width: 50px;
  height: 50px;
  display: grid;
  place-items: center;
}
.app svg { width: 30px; height: 30px; }
.app .cp { width: 28px; height: 26px; }
.active { background: #353635; border-radius: 5px; box-shadow: inset 0 0 0 1px #414241; }
.run {
  position: absolute;
  bottom: 1px;
  left: 21px;
  width: 8px;
  height: 4px;
  border-radius: 2px;
  background: #9a9a98;
}
.run.on { left: 15px; width: 20px; background: #4cc2ff; }
.count {
  position: absolute;
  left: 26px;
  top: 4px;
  width: 20px;
  height: 20px;
  border-radius: 50%;
  background: #4cc2ff;
  color: #111;
  line-height: 20px;
  text-align: center;
}
.app .mini { position: absolute; left: 26px; top: 4px; width: 20px; height: 20px; }
.tray { display: flex; align-items: center; margin: -2px 0 0 87px; }
.up { width: 14px; height: 9px; }
.cloud { width: 20px; height: 14px; margin-left: 23px; }
.lang { width: 40px; margin: 0 17px 0 18px; text-align: center; }
.sys { width: 20px; height: 20px; margin-right: 10px; }
.battery { margin-right: 9px; }
.clock { width: 90px; font-size: 14.700px; text-align: right; }
.bell { width: 18px; height: 20px; margin-left: 10px; }
```
